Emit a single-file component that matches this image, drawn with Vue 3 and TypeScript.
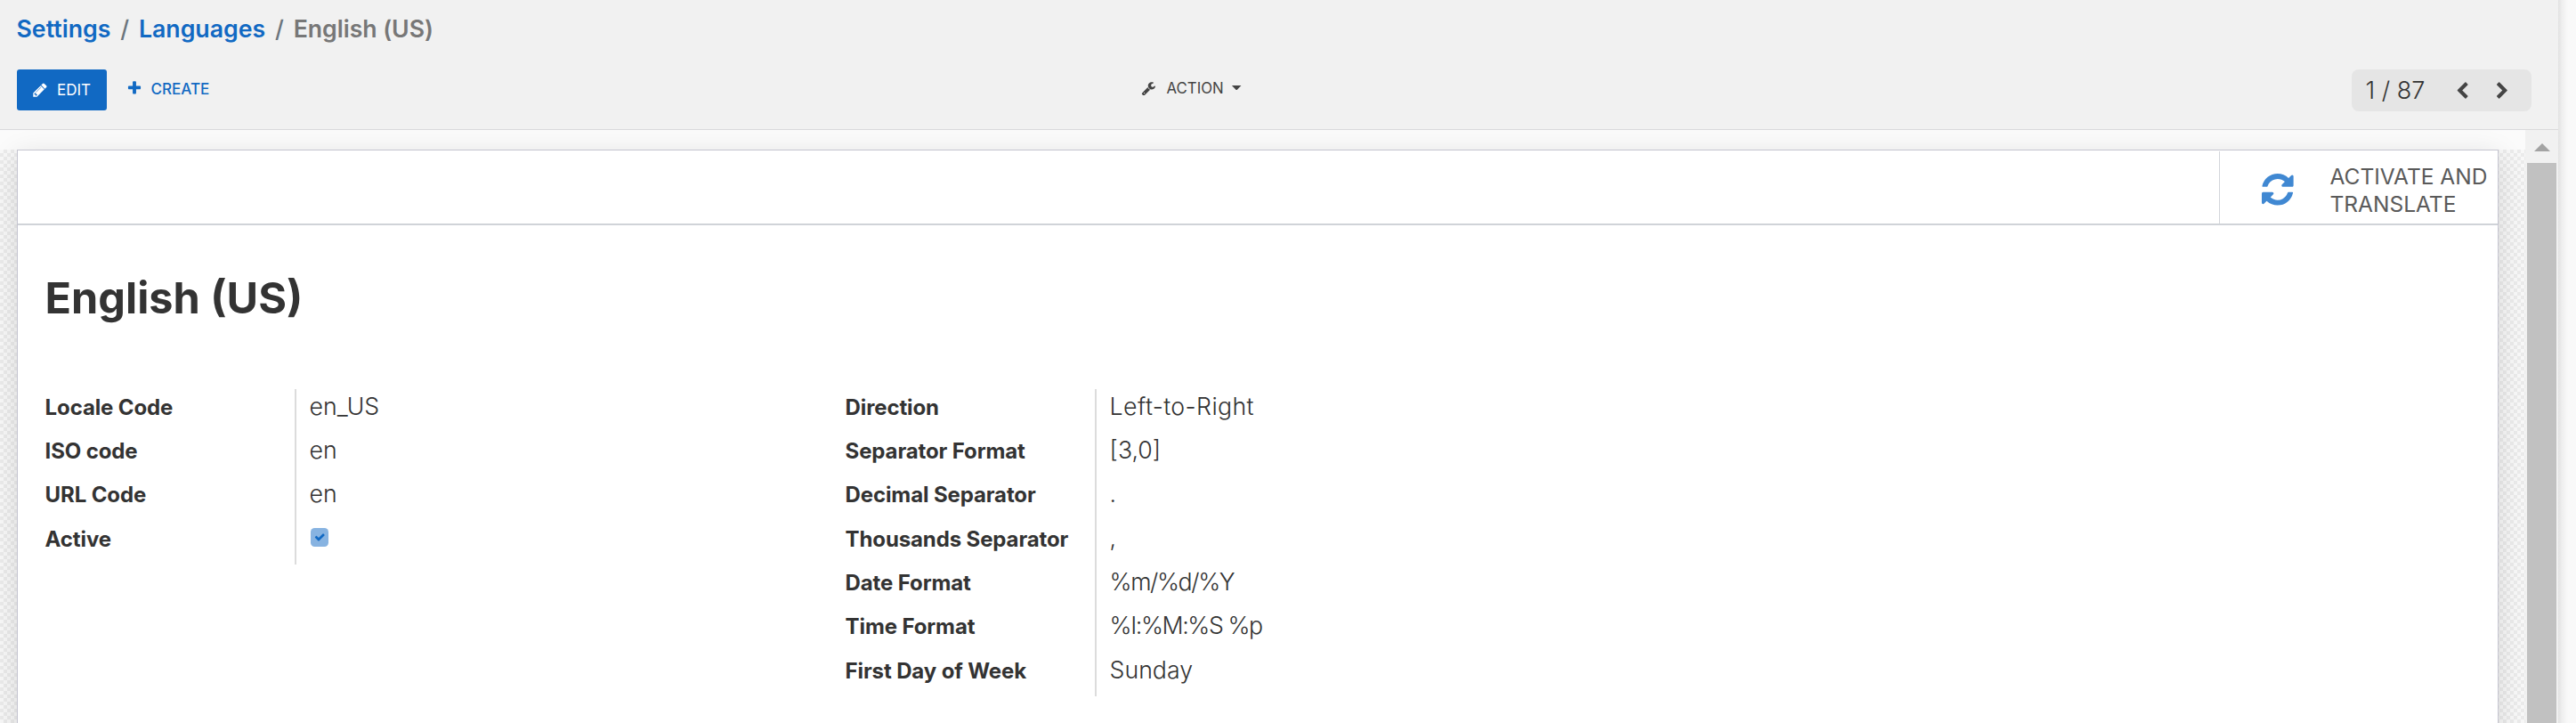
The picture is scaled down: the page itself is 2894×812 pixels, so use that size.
<script setup lang="ts">
interface Field {
  label: string
  value?: string
  tone?: string
  checked?: boolean
}

const icons = {
  pencil:
    'M491 1536l91-91-235-235-91 91v107h128v128h107zm523-928q0-22-22-22-10 0-17 7l-542 542q-7 7-7 17 0 22 22 22 10 0 17-7l542-542q7-7 7-17zm-54-192l416 416-832 832h-416v-416zm683 96q0 53-37 90l-166 166-416-416 166-165q36-38 90-38 53 0 91 38l235 234q37 39 37 91z',
  plus:
    'M1600 736v192q0 40-28 68t-68 28h-416v416q0 40-28 68t-68 28h-192q-40 0-68-28t-28-68v-416h-416q-40 0-68-28t-28-68v-192q0-40 28-68t68-28h416v-416q0-40 28-68t68-28h192q40 0 68 28t28 68v416h416q40 0 68 28t28 68z',
  wrench:
    'M448 1472q0-26-19-45t-45-19-45 19-19 45 19 45 45 19 45-19 19-45zm644-420l-682 682q-37 37-90 37-52 0-91-37l-106-108q-38-36-38-90 0-53 38-91l681-681q39 98 114.5 173.5t173.5 114.5zm634-435q0 39-23 106-47 134-164.5 217.5t-258.5 83.5q-185 0-316.5-131.5t-131.5-316.5 131.5-316.5 316.5-131.5q58 0 121.5 16.5t107.5 46.5q16 11 16 28t-16 28l-293 169v224l193 107q5-3 79-48.5t135.5-81 70.5-35.5q15 0 23.5 10t8.5 25z',
  refresh:
    'M1639 1056q0 5-1 7-64 268-268 434.5t-478 166.5q-146 0-282.5-55t-243.5-157l-129 129q-19 19-45 19t-45-19-19-45v-448q0-26 19-45t45-19h448q26 0 45 19t19 45-19 45l-137 137q71 66 161 102t187 36q134 0 250-65t186-179q11-17 53-117 8-23 30-23h192q13 0 22.5 9.5t9.5 22.5zm25-800v448q0 26-19 45t-45 19h-448q-26 0-45-19t-19-45 19-45l138-138q-148-137-349-137-134 0-250 65t-186 179q-11 17-53 117-8 23-30 23h-199q-13 0-22.5-9.5t-9.5-22.5v-7q65-268 270-434.5t480-166.5q146 0 284 55.5t245 156.5l130-129q19-19 45-19t45 19 19 45z',
  check:
    'M1671 566q0 40-28 68l-724 724-136 136q-28 28-68 28t-68-28l-136-136-362-362q-28-28-28-68t28-68l136-136q28-28 68-28t68 28l294 295 656-657q28-28 68-28t68 28l136 136q28 28 28 68z',
  chevron:
    'M1427 301l-531 531 531 531q19 19 19 45t-19 45l-166 166q-19 19-45 19t-45-19l-742-742q-19-19-19-45t19-45l742-742q19-19 45-19t45 19l166 166q19 19 19 45t-19 45z',
}

const groups: Field[][] = [
  [
    { label: 'Locale Code', value: 'en_US' },
    { label: 'ISO code', value: 'en' },
    { label: 'URL Code', value: 'en' },
    { label: 'Active', checked: true },
  ],
  [
    { label: 'Direction', value: 'Left-to-Right', tone: 'wide' },
    { label: 'Separator Format', value: '[3,0]' },
    { label: 'Decimal Separator', value: '.' },
    { label: 'Thousands Separator', value: ',' },
    { label: 'Date Format', value: '%m/%d/%Y', tone: 'tight' },
    { label: 'Time Format', value: '%I:%M:%S %p', tone: 'tight' },
    { label: 'First Day of Week', value: 'Sunday' },
  ],
]
</script>

<template>
  <div class="page">
    <div class="app">
      <header class="panel">
        <nav class="crumbs">
          <a>Settings</a><span class="sep">/</span><a>Languages</a><span class="sep">/</span>
          <span class="current">English (US)</span>
        </nav>
        <div class="toolbar">
          <div class="left">
            <button class="edit">
              <svg viewBox="0 0 1792 1792"><path :d="icons.pencil" /></svg><span>EDIT</span>
            </button>
            <button class="create">
              <svg viewBox="0 0 1792 1792"><path :d="icons.plus" /></svg><span>CREATE</span>
            </button>
          </div>
          <button class="action">
            <svg viewBox="0 0 1792 1792"><path :d="icons.wrench" /></svg><span>ACTION</span><i class="caret"></i>
          </button>
          <div class="pager">
            <span class="count">1 / 87</span>
            <svg viewBox="0 0 1792 1792"><path :d="icons.chevron" /></svg>
            <svg class="next" viewBox="0 0 1792 1792"><path :d="icons.chevron" /></svg>
          </div>
        </div>
      </header>

      <div class="body">
        <main class="content">
          <section class="sheet">
            <div class="buttonbox">
              <button class="stat">
                <svg viewBox="0 0 1792 1792"><path :d="icons.refresh" /></svg>
                <span>ACTIVATE AND<br />TRANSLATE</span>
              </button>
            </div>
            <h1>English (US)</h1>
            <div class="groups">
              <div v-for="(group, g) in groups" :key="g" class="group">
                <div v-for="field in group" :key="field.label" class="row">
                  <label>{{ field.label }}</label>
                  <div class="value" :class="field.tone">
                    <span v-if="field.checked" class="checkbox">
                      <svg viewBox="0 0 1792 1792"><path :d="icons.check" /></svg>
                    </span>
                    <template v-else>{{ field.value }}</template>
                  </div>
                </div>
              </div>
            </div>
          </section>
        </main>
        <div class="scrollbar">
          <i class="up"></i>
          <div class="thumb"></div>
        </div>
      </div>
    </div>
    <div class="gutter"></div>
  </div>
</template>

<style>
body {
  margin: 0;
  overflow: hidden;
}
</style>

<style scoped>
.page {
  display: flex;
  width: 2894px;
  height: 812px;
  overflow: hidden;
  font-family: Inter, 'Liberation Sans', sans-serif;
  color: #333;
}
.app {
  display: flex;
  flex-direction: column;
  width: 2874px;
}
.gutter {
  flex: 1;
  background: linear-gradient(to right, #e2e2e2, #f0f0f0 5px, #f9f9f9 11px);
}
svg {
  display: block;
  fill: currentColor;
  flex: none;
}
button {
  display: flex;
  box-sizing: border-box;
  margin: 0;
  padding: 0;
  border: 0;
  background: none;
  font-family: inherit;
  text-align: left;
}

/* Control panel */
.panel {
  box-sizing: border-box;
  height: 146px;
  flex: none;
  background: #f1f1f1;
  border-bottom: 1px solid #d9d9db;
  padding: 16px 30px 0 18.5px;
}
.crumbs {
  display: flex;
  height: 62px;
  font-size: 26.7px;
  line-height: 33px;
  font-weight: 600;
}
.crumbs a {
  color: #1169c3;
}
.sep {
  width: 31.6px;
  text-align: center;
  color: #6c757d;
  font-weight: 500;
}
.current {
  color: #777;
  letter-spacing: -0.05px;
}
.toolbar {
  display: grid;
  grid-template-columns: 1263.5px 1fr auto;
}
.left {
  display: flex;
}
.edit {
  width: 101px;
  height: 46px;
  margin-left: 0.5px;
  padding: 13.6px 0 0 17px;
  border-radius: 3px;
  background: #1169c3;
  color: #fff;
  font-size: 17px;
  line-height: 29px;
}
.edit svg,
.create svg {
  width: 18px;
  height: 18px;
}
.edit span {
  margin: -5px 0 0 10px;
}
.create {
  padding: 12.3px 0 0 22.4px;
  color: #1169c3;
  font-size: 17.1px;
  line-height: 29px;
  font-weight: 540;
}
.create span {
  margin: -5.3px 0 0 9px;
}
.action {
  padding-top: 12.8px;
  color: #444;
  font-size: 16.8px;
  line-height: 29px;
}
.action svg {
  width: 16.6px;
  height: 16.6px;
}
.action span {
  margin: -5.6px 0 0 12px;
}
.caret {
  margin: 5px 0 0 9px;
  border: 5.8px solid transparent;
  border-top-color: #444;
  border-bottom: 0;
  height: 0;
}
/* Fractional border widths are floored, so the caret is sized as a clipped box. */
.caret {
  width: 11px;
  height: 5.6px;
  border: 0;
  background: #444;
  clip-path: polygon(0 0, 100% 0, 50% 100%);
}
.pager {
  display: flex;
  box-sizing: border-box;
  width: 202px;
  height: 47px;
  padding: 7px 0 0 15.5px;
  border-radius: 8px;
  background: #e5e5e5;
  color: #444;
}
.count {
  width: 98px;
  font-size: 27px;
  line-height: 33px;
  font-weight: 340;
  color: #333;
}
.pager svg {
  width: 20.5px;
  height: 20.5px;
  margin-top: 6.5px;
}
.pager .next {
  margin-left: 25.2px;
  transform: scaleX(-1);
}

/* Form area */
.body {
  display: flex;
  flex: 1;
  min-height: 0;
}
.content {
  flex: 1;
  box-sizing: border-box;
  overflow: hidden;
  padding: 22px 30px 0 19px;
  background:
    linear-gradient(#fbfbfb, #fbfbfb) 0 0 / 100% 22px no-repeat,
    conic-gradient(#ebebeb 25%, #f8f8f8 0 50%, #ebebeb 0 75%, #f8f8f8 0) 0 22px / 8px 8px;
}
.sheet {
  box-sizing: border-box;
  height: 760px;
  border: 1px solid #c5c5d0;
  background: #fff;
  box-shadow: 0 7px 30px rgba(0, 0, 0, 0.13);
}
.buttonbox {
  display: flex;
  justify-content: flex-end;
  box-sizing: border-box;
  height: 84px;
  padding-top: 1px;
  border-bottom: 2px solid #d0d3d8;
}
.stat {
  width: 313px;
  height: 81px;
  padding-left: 44px;
  border-left: 1px solid #d3d5da;
  color: #5a5a5a;
}
.stat svg {
  width: 41.6px;
  height: 41.6px;
  margin-top: 21.5px;
  color: #4088d2;
}
.stat span {
  margin: 12.6px 0 0 37.9px;
  font-size: 24.5px;
  line-height: 31px;
  white-space: nowrap;
}
h1 {
  margin: 52px 0 0 30.5px;
  font-size: 48.6px;
  line-height: 60px;
  font-weight: 700;
}
.groups {
  display: grid;
  grid-template-columns: 899px 1fr;
  align-items: start;
  margin: 71.7px 0 0 30px;
}
.group {
  background: linear-gradient(#dcdcdc, #dcdcdc) 281px 0 / 2px 100% no-repeat;
}
.row {
  display: flex;
  align-items: baseline;
  height: 49.333px;
}
.row label {
  box-sizing: border-box;
  width: 297.6px;
  padding-left: 0.6px;
  font-size: 24px;
  line-height: 41px;
  font-weight: 660;
  letter-spacing: -0.12px;
}
.value {
  font-size: 26.7px;
  line-height: 38px;
  font-weight: 340;
}
.wide {
  letter-spacing: 0.4px;
}
.tight {
  letter-spacing: -1.4px;
}
.checkbox {
  display: block;
  box-sizing: border-box;
  width: 20.5px;
  height: 20.5px;
  margin: 0 0 0 1.4px;
  padding: 3.8px;
  border-radius: 4.5px;
  background: #87b3e1;
  color: #1169c3;
}
.checkbox svg {
  width: 12.5px;
  height: 12.5px;
}

/* Scrollbar */
.scrollbar {
  width: 37px;
  box-sizing: border-box;
  padding: 15px 2px 0;
  background: #f1f1f1;
}
.up {
  display: block;
  width: 0;
  margin: 0 auto;
  border: 9px solid transparent;
  border-bottom-color: #a3a3a3;
  border-top: 0;
}
.thumb {
  height: 700px;
  margin-top: 13px;
  background: #c1c1c1;
}
</style>
